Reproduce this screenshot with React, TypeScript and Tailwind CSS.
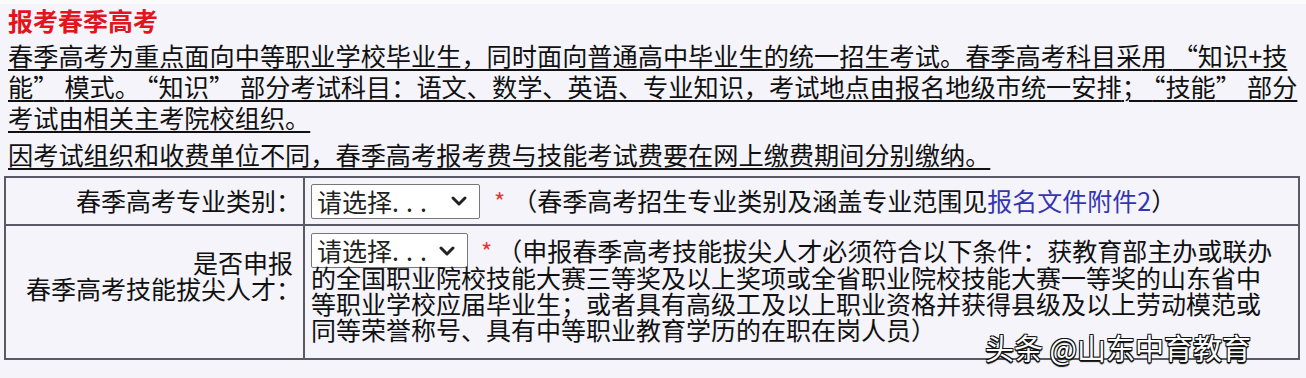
import { ChevronDown } from "lucide-react";

function FakeSelect({ w }: { w: string }) {
  return (
    <div
      className={`${w} h-[35px] shrink-0 bg-white border border-[#777] rounded-[2px] flex items-center justify-between pl-[5px] pr-[8px]`}
    >
      <span className="leading-none text-[#222]">
        请选择<span className="tracking-[7px]">...</span>
      </span>
      <ChevronDown size={24} strokeWidth={3} className="text-[#222]" />
    </div>
  );
}

// widen around the curly quotes so they take a full cell like the original
function W({ c }: { c: string }) {
  return <span className="tracking-[6px]">{c}</span>;
}

export default function App() {
  return (
    <div className="relative w-[1306px] h-[378px] overflow-hidden bg-[#f4f4fa] text-[25px] text-[#111] font-['Noto_Sans_CJK_SC',sans-serif]">
      <div className="h-[4px] bg-[#fbfbfc]" />
      <div className="px-[8px]">
        <h2 className="text-[#e3141c] font-bold text-[25px] leading-[32px]">
          报考春季高考
        </h2>
        <p className="mt-[4px] text-[25.2px] leading-[31px] whitespace-nowrap underline decoration-[1.5px] underline-offset-[3px]">
          春季高考为重点面向中等职业学校毕业生，同时面向普通高中毕业生的统一招生考试。春季高考科目采
          <W c="用" />
          “知识+技
          <br />
          能<W c="”" />
          模式<W c="。" />
          “知识<W c="”" />
          部分考试科目：语文、数学、英语、专业知识，考试地点由报名地级市统一安排
          <W c="；" />
          “技能<W c="”" />
          部分
          <br />
          考试由相关主考院校组织。
        </p>
        <p className="mt-[6px] text-[25.2px] leading-[31px] whitespace-nowrap underline decoration-[1.5px] underline-offset-[3px]">
          因考试组织和收费单位不同，春季高考报考费与技能考试费要在网上缴费期间分别缴纳。
        </p>
      </div>

      <div className="mt-[6px] ml-[4px] w-[1296px] border-2 border-[#5a5a66] grid grid-cols-[299px_1fr]">
        <div className="h-[48px] border-r-2 border-b-2 border-[#5a5a66] flex items-center justify-end pr-[2px]">
          春季高考专业类别：
        </div>
        <div className="h-[48px] border-b-2 border-[#5a5a66] flex items-center pl-[6px]">
          <FakeSelect w="w-[169px]" />
          <span className="ml-[14px] text-[#e33] text-[24px]">*</span>
          <span className="ml-[7px] whitespace-nowrap">
            （春季高考招生专业类别及涵盖专业范围见
            <span className="text-[#3434b4]">报名文件附件2</span>）
          </span>
        </div>

        <div className="h-[132px] border-r-2 border-[#5a5a66] flex flex-col items-end justify-center pr-[10px] pb-[34px] leading-[26px]">
          <span>是否申报</span>
          <span className="-mr-[8px]">春季高考技能拔尖人才：</span>
        </div>
        <div className="h-[132px] pl-[6px] pt-[6px]">
          <div className="flex items-center">
            <FakeSelect w="w-[157px]" />
            <span className="ml-[13px] text-[#e33] text-[24px]">*</span>
            <span className="ml-[5px] whitespace-nowrap">
              （申报春季高考技能拔尖人才必须符合以下条件：获教育部主办或联办
            </span>
          </div>
          <div className="-mt-[6px] leading-[26px] whitespace-nowrap">
            的全国职业院校技能大赛三等奖及以上奖项或全省职业院校技能大赛一等奖的山东省中
            <br />
            等职业学校应届毕业生；或者具有高级工及以上职业资格并获得县级及以上劳动模范或
            <br />
            同等荣誉称号、具有中等职业教育学历的在职在岗人员）
          </div>
        </div>
      </div>

      <div className="absolute left-[985px] top-[331px] text-[29px] leading-[32px] text-white whitespace-nowrap [text-shadow:1px_1px_0_#111,-1px_-1px_0_#111,1px_-1px_0_#111,-1px_1px_0_#111,0_2px_1px_#111]">
        头条 @山东中育教育
      </div>
    </div>
  );
}
